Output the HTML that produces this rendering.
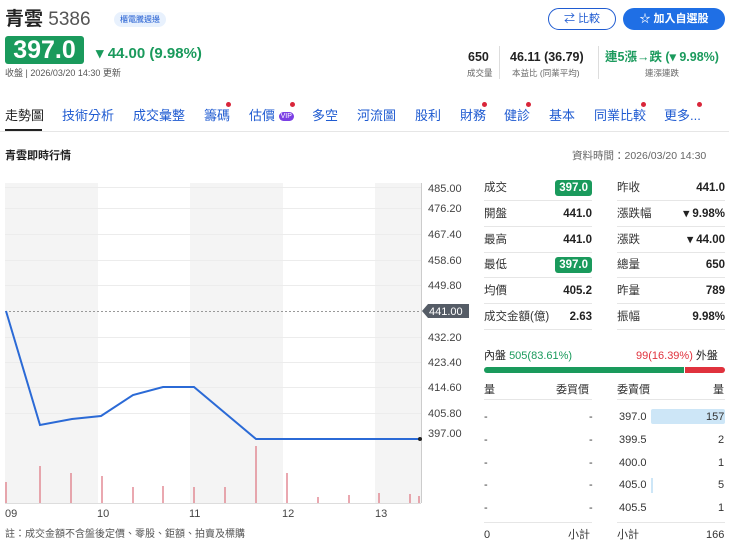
<!DOCTYPE html>
<html><head><meta charset="utf-8"><style>
*{margin:0;padding:0;box-sizing:border-box}
body{width:729px;height:546px;overflow:hidden;background:#fff;font-family:"Liberation Sans","Noto Sans CJK TC",sans-serif;color:#222;position:relative}
.a{position:absolute;white-space:nowrap}
.g{color:#1a9a5c}.r{color:#e0323d}
.tab{font-size:13px;color:#1f5bd1;top:106px;line-height:20px}
.dot{position:absolute;width:5px;height:5px;border-radius:50%;background:#d9263a}
.row{position:absolute;font-size:11.5px;height:26px;border-bottom:1px solid #e6e6e6;display:flex;justify-content:space-between;align-items:center;line-height:16px}
.lb{color:#333}
.vl{font-weight:bold;color:#222}
.gb{background:#1a9a5c;color:#fff;border-radius:3px;padding:0 4px}
.bk{position:absolute;font-size:11px;color:#333;line-height:14px}
</style></head><body>
<div class="a" style="left:5px;top:7px;font-size:19px;color:#222;font-weight:bold;line-height:26px">青雲 <span style="font-weight:normal;color:#555">5386</span></div>
<div class="a" style="left:114px;top:12px;font-size:8px;background:#e8f1fd;color:#1f5bd1;border-radius:8px;padding:2px 6px">櫃電騰週邊</div>
<div class="a" style="left:5px;top:36px;width:79px;height:28px;background:#1a9a5c;border-radius:3px;color:#fff;font-size:25px;font-weight:bold;line-height:28px;text-align:center">397.0</div>
<div class="a g" style="left:96px;top:45px;font-size:15px;font-weight:bold;line-height:18px">▾ 44.00 (9.98%)</div>
<div class="a" style="left:5px;top:67px;font-size:9px;color:#555;line-height:12px">收盤 | 2026/03/20 14:30 更新</div>
<div class="a" style="left:548px;top:8px;width:68px;height:22px;border:1px solid #1f5bd1;border-radius:11px;color:#1f5bd1;font-size:11px;text-align:center;line-height:20px">⇄ 比較</div>
<div class="a" style="left:623px;top:8px;width:102px;height:22px;background:#1f6fe5;border-radius:11px;color:#fff;font-size:11px;font-weight:bold;text-align:center;line-height:22px">☆ 加入自選股</div>
<div class="a" style="left:468px;top:49px;font-size:12.5px;font-weight:bold;line-height:16px">650</div>
<div class="a" style="left:467px;top:67px;font-size:8.5px;color:#666;line-height:12px">成交量</div>
<div class="a" style="left:499px;top:46px;width:1px;height:33px;background:#ddd"></div>
<div class="a" style="left:510px;top:49px;font-size:12.5px;font-weight:bold;line-height:16px">46.11 (36.79)</div>
<div class="a" style="left:512px;top:67px;font-size:8.5px;color:#666;line-height:12px">本益比 (同業平均)</div>
<div class="a" style="left:598px;top:46px;width:1px;height:33px;background:#ddd"></div>
<div class="a g" style="left:605px;top:49px;font-size:12.5px;font-weight:bold;line-height:16px">連5漲→跌 (▾ 9.98%)</div>
<div class="a" style="left:645px;top:67px;font-size:8.5px;color:#666;line-height:12px">連漲連跌</div>

<div class="a tab" style="left:5px;color:#222">走勢圖</div>
<div class="a" style="left:5px;top:129px;width:37px;height:2px;background:#222"></div>
<div class="a tab" style="left:62px">技術分析</div>
<div class="a tab" style="left:133px">成交彙整</div>
<div class="a tab" style="left:204px">籌碼</div><div class="dot" style="left:226px;top:102px"></div>
<div class="a tab" style="left:249px">估價 <span style="background:#7b3fe4;color:#fff;font-size:7px;border-radius:7px;padding:1px 2px;vertical-align:2px">VIP</span></div><div class="dot" style="left:290px;top:102px"></div>
<div class="a tab" style="left:312px">多空</div>
<div class="a tab" style="left:357px">河流圖</div>
<div class="a tab" style="left:415px">股利</div>
<div class="a tab" style="left:460px">財務</div><div class="dot" style="left:482px;top:102px"></div>
<div class="a tab" style="left:504px">健診</div><div class="dot" style="left:526px;top:102px"></div>
<div class="a tab" style="left:549px">基本</div>
<div class="a tab" style="left:594px">同業比較</div><div class="dot" style="left:641px;top:102px"></div>
<div class="a tab" style="left:664px">更多...</div><div class="dot" style="left:697px;top:102px"></div>
<div class="a" style="left:0;top:131px;width:729px;height:1px;background:#e6e6e6"></div>

<div class="a" style="left:5px;top:149px;font-size:11px;font-weight:bold;line-height:14px">青雲即時行情</div>
<div class="a" style="left:572px;top:149px;font-size:10.5px;color:#666;line-height:14px">資料時間：2026/03/20 14:30</div>

<svg class="a" style="left:0;top:175px" width="475" height="350" viewBox="0 175 475 350">
<rect x="5" y="183" width="93" height="320" fill="#f4f4f4"/>
<rect x="190" y="183" width="93" height="320" fill="#f4f4f4"/>
<rect x="375" y="183" width="46" height="320" fill="#f4f4f4"/>
<g stroke="#ececec" stroke-width="1">
<line x1="5" x2="421" y1="187.5" y2="187.5"/><line x1="5" x2="421" y1="208.5" y2="208.5"/><line x1="5" x2="421" y1="234.5" y2="234.5"/><line x1="5" x2="421" y1="260.5" y2="260.5"/><line x1="5" x2="421" y1="285.5" y2="285.5"/><line x1="5" x2="421" y1="337.5" y2="337.5"/><line x1="5" x2="421" y1="362.5" y2="362.5"/><line x1="5" x2="421" y1="387.5" y2="387.5"/><line x1="5" x2="421" y1="413.5" y2="413.5"/>
</g>
<line x1="421.5" x2="421.5" y1="183" y2="503" stroke="#ccc"/>
<line x1="5" x2="421" y1="503.5" y2="503.5" stroke="#ddd"/>
<line x1="5" x2="421" y1="311.5" y2="311.5" stroke="#999" stroke-dasharray="2,2"/>
<polyline fill="none" stroke="#2b6ad6" stroke-width="2" points="6,311 40,425 72,419 101,416 133,395 163,387 194,387 256,439 420,439"/>
<circle cx="420" cy="439" r="2" fill="#222"/>
<g stroke="#e28b95" stroke-width="1.5">
<line x1="6" x2="6" y1="503" y2="482"/><line x1="40" x2="40" y1="503" y2="466"/><line x1="71" x2="71" y1="503" y2="473"/><line x1="102" x2="102" y1="503" y2="476"/><line x1="133" x2="133" y1="503" y2="487"/><line x1="163" x2="163" y1="503" y2="486"/><line x1="194" x2="194" y1="503" y2="487"/><line x1="225" x2="225" y1="503" y2="487"/><line x1="256" x2="256" y1="503" y2="446"/><line x1="287" x2="287" y1="503" y2="473"/><line x1="318" x2="318" y1="503" y2="497"/><line x1="349" x2="349" y1="503" y2="495"/><line x1="379" x2="379" y1="503" y2="493"/><line x1="410" x2="410" y1="503" y2="494"/><line x1="419" x2="419" y1="503" y2="496"/>
</g>
<g font-size="11" fill="#444" font-family="Liberation Sans,sans-serif">
<text x="428" y="192">485.00</text><text x="428" y="212">476.20</text><text x="428" y="238">467.40</text><text x="428" y="264">458.60</text><text x="428" y="289">449.80</text><text x="428" y="341">432.20</text><text x="428" y="366">423.40</text><text x="428" y="391">414.60</text><text x="428" y="417">405.80</text><text x="428" y="437">397.00</text>
<text x="5" y="517">09</text><text x="97" y="517">10</text><text x="189" y="517">11</text><text x="282" y="517">12</text><text x="375" y="517">13</text>
</g>
<path d="M422 311 L428 304 H469 V318 H428 Z" fill="#555c66"/>
<text x="429" y="315" font-size="11" fill="#fff" font-family="Liberation Sans,sans-serif">441.00</text>
</svg>
<div class="a" style="left:5px;top:528px;font-size:10px;color:#555;line-height:14px">註：成交金額不含盤後定價、零股、鉅額、拍賣及標購</div>

<div class="row" style="left:484px;top:175px;width:108px"><span class="lb">成交</span><span class="vl gb">397.0</span></div>
<div class="row" style="left:484px;top:201px;width:108px"><span class="lb">開盤</span><span class="vl">441.0</span></div>
<div class="row" style="left:484px;top:227px;width:108px"><span class="lb">最高</span><span class="vl">441.0</span></div>
<div class="row" style="left:484px;top:252px;width:108px"><span class="lb">最低</span><span class="vl gb">397.0</span></div>
<div class="row" style="left:484px;top:278px;width:108px"><span class="lb">均價</span><span class="vl">405.2</span></div>
<div class="row" style="left:484px;top:304px;width:108px"><span class="lb">成交金額(億)</span><span class="vl">2.63</span></div>
<div class="row" style="left:617px;top:175px;width:108px"><span class="lb">昨收</span><span class="vl">441.0</span></div>
<div class="row" style="left:617px;top:201px;width:108px"><span class="lb">漲跌幅</span><span class="vl g">▾ 9.98%</span></div>
<div class="row" style="left:617px;top:227px;width:108px"><span class="lb">漲跌</span><span class="vl g">▾ 44.00</span></div>
<div class="row" style="left:617px;top:252px;width:108px"><span class="lb">總量</span><span class="vl">650</span></div>
<div class="row" style="left:617px;top:278px;width:108px"><span class="lb">昨量</span><span class="vl">789</span></div>
<div class="row" style="left:617px;top:304px;width:108px"><span class="lb">振幅</span><span class="vl">9.98%</span></div>

<div class="a" style="left:484px;top:349px;font-size:11px;line-height:14px">內盤 <span class="g">505(83.61%)</span></div>
<div class="a" style="left:636px;top:349px;font-size:11px;line-height:14px"><span class="r">99(16.39%)</span> 外盤</div>
<div class="a" style="left:484px;top:367px;width:200px;height:6px;background:#1a9a5c;border-radius:3px 0 0 3px"></div>
<div class="a" style="left:685px;top:367px;width:40px;height:6px;background:#e0323d;border-radius:0 3px 3px 0"></div>
<div class="bk" style="left:484px;top:383px">量</div>
<div class="bk" style="left:556px;top:383px">委買價</div>
<div class="bk" style="left:617px;top:383px">委賣價</div>
<div class="bk" style="left:713px;top:383px">量</div>
<div class="a" style="left:484px;top:399px;width:108px;height:1px;background:#e6e6e6"></div>
<div class="a" style="left:617px;top:399px;width:108px;height:1px;background:#e6e6e6"></div>
<div class="a" style="left:651px;top:409px;width:74px;height:15px;background:#cde6f7;border-radius:2px"></div>
<div class="a" style="left:651px;top:478px;width:2px;height:15px;background:#cde6f7"></div>
<div class="bk" style="left:484px;top:410px">-</div><div class="bk" style="left:589px;top:410px">-</div>
<div class="bk" style="left:484px;top:433px">-</div><div class="bk" style="left:589px;top:433px">-</div>
<div class="bk" style="left:484px;top:456px">-</div><div class="bk" style="left:589px;top:456px">-</div>
<div class="bk" style="left:484px;top:478px">-</div><div class="bk" style="left:589px;top:478px">-</div>
<div class="bk" style="left:484px;top:501px">-</div><div class="bk" style="left:589px;top:501px">-</div>
<div class="bk" style="left:619px;top:410px">397.0</div><div class="bk" style="left:706px;top:410px">157</div>
<div class="bk" style="left:619px;top:433px">399.5</div><div class="bk" style="left:718px;top:433px">2</div>
<div class="bk" style="left:619px;top:456px">400.0</div><div class="bk" style="left:718px;top:456px">1</div>
<div class="bk" style="left:619px;top:478px">405.0</div><div class="bk" style="left:718px;top:478px">5</div>
<div class="bk" style="left:619px;top:501px">405.5</div><div class="bk" style="left:718px;top:501px">1</div>
<div class="a" style="left:484px;top:522px;width:108px;height:1px;background:#e6e6e6"></div>
<div class="a" style="left:617px;top:522px;width:108px;height:1px;background:#e6e6e6"></div>
<div class="bk" style="left:484px;top:528px">0</div><div class="bk" style="left:568px;top:528px">小計</div>
<div class="bk" style="left:617px;top:528px">小計</div><div class="bk" style="left:706px;top:528px">166</div>
</body></html>
